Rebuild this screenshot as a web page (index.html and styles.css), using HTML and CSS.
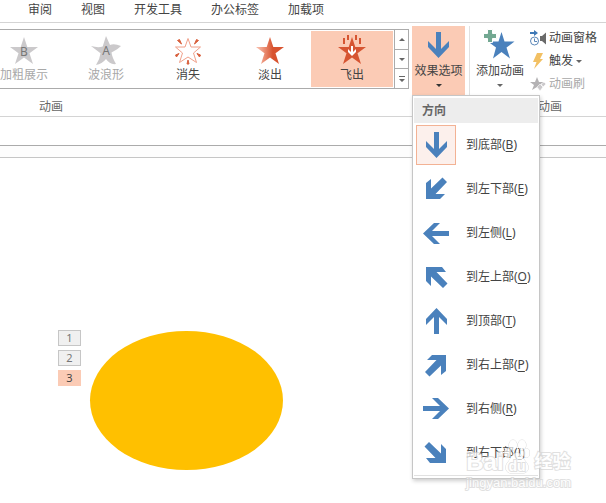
FILE: index.html
```html
<!DOCTYPE html>
<html lang="zh-CN">
<head>
    <meta charset="UTF-8">
    <meta name="viewport" content="width=device-width, initial-scale=1.0">
    <title>动画</title>
    <link rel="stylesheet" href="styles.css">
</head>
<body>
    <svg class="defs" aria-hidden="true">
        <defs>
            <linearGradient id="fade" x1="0" x2="1" y1="0" y2="0">
                <stop offset="0.1" stop-color="#f6b5a1"/>
                <stop offset="0.6" stop-color="#d8532f"/>
            </linearGradient>
            <symbol id="star" viewBox="0 0 32 32">
                <path d="M16 3 19.3 13H30L21.5 19.3 25 30 16 23.6 7 30 10.5 19.3 2 13H12.7Z"/>
            </symbol>
            <symbol id="arrow" viewBox="0 0 26 26">
                <path d="M11 0h5v17l8-8v6L13.5 26 3 15V9l8 8z"/>
            </symbol>
            <symbol id="arrow-diagonal" viewBox="0 0 26 26">
                <path d="M3 7 8 3V12.500L19.500 1.500 24 6 12.500 18H22L17 23H3Z"/>
            </symbol>
        </defs>
    </svg>

    <nav class="tabs">
        <button>审阅</button>
        <button>视图</button>
        <button>开发工具</button>
        <button>办公标签</button>
        <button>加载项</button>
    </nav>

    <div class="ribbon">
        <div class="group group-animation">
            <div class="controls">
                <div class="gallery">
                    <div class="gallery-items">
                        <button class="effect" disabled>
                            <svg class="icon-32" viewBox="0 0 32 32">
                                <use href="#star" fill="#cbc9cb"/>
                                <text x="16" y="22" class="star-letter">B</text>
                            </svg>
                            加粗展示
                        </button>
                        <button class="effect" disabled>
                            <svg class="icon-32" viewBox="0 0 32 32">
                                <path fill="#cbc9cb" d="M16 2 20 11Q24 9 31 12 28 15 21.5 18.5 22 23 26 30 20 31 16 25 12 30 6 31 10 25 10.5 19.3L1 12Q8 14 12.7 12.5Z"/>
                                <text x="16" y="21" class="star-letter">A</text>
                            </svg>
                            波浪形
                        </button>
                        <button class="effect">
                            <svg class="icon-32" viewBox="0 0 32 32">
                                <path fill="#fff" stroke="#f0a08a" d="M16 4.500 19 13H28.500L21.500 19 24.500 28.500 16 23 7.500 28.500 10.500 19 3.500 13H13Z"/>
                                <path fill="#d8603d" stroke="#d8603d" stroke-linejoin="round" d="M5.500 6.500 7.500 5.500 9.500 10ZM26.500 6.500 24.500 5.500 22.500 10ZM3.500 21 7 19.500 4.500 23ZM28.500 21 25 19.500 27.500 23ZM16 26 17 30H15Z"/>
                            </svg>
                            消失
                        </button>
                        <button class="effect">
                            <svg class="icon-32" viewBox="0 0 32 32"><use href="#star" fill="url(#fade)"/></svg>
                            淡出
                        </button>
                        <button class="effect selected">
                            <svg class="icon-32" viewBox="0 0 32 32">
                                <use href="#star" fill="#d65532"/>
                                <path fill="#d65532" d="M7 4h2v6H7zM11 1h2v5h-2zM19 1h2v5h-2zM23 4h2v6h-2z"/>
                                <path fill="#fff" d="M15 12h2v6l3-3v3l-4 4-4-4v-3l3 3z"/>
                            </svg>
                            飞出
                        </button>
                    </div>
                    <div class="scroller">
                        <button aria-label="上一行"><svg viewBox="0 0 8 8"><path d="M1 6H7L4 3Z"/></svg></button>
                        <button aria-label="下一行"><svg viewBox="0 0 8 8"><path d="M1 3H7L4 6Z"/></svg></button>
                        <button aria-label="其他"><svg viewBox="0 0 8 8"><path d="M1 1h6v1H1zM1 4H7L4 7Z"/></svg></button>
                    </div>
                </div>
                <div class="dropdown">
                    <button class="big-button open" aria-expanded="true">
                        <svg class="icon-32" viewBox="0 0 32 32"><use href="#arrow" x="2" y="3" width="26" height="26" fill="#4a81bc"/></svg>
                        效果选项
                        <span class="caret"></span>
                    </button>
                    <div class="menu">
                        <h2>方向</h2>
                        <button class="menu-item current">
                            <span class="menu-icon"><svg viewBox="0 0 26 26"><use href="#arrow"/></svg></span>
                            <span>到底部(<u>B</u>)</span>
                        </button>
                        <button class="menu-item">
                            <span class="menu-icon"><svg viewBox="0 0 26 26"><use href="#arrow-diagonal"/></svg></span>
                            <span>到左下部(<u>E</u>)</span>
                        </button>
                        <button class="menu-item">
                            <span class="menu-icon"><svg viewBox="0 0 26 26"><use href="#arrow" transform="rotate(90 13 13)"/></svg></span>
                            <span>到左侧(<u>L</u>)</span>
                        </button>
                        <button class="menu-item">
                            <span class="menu-icon"><svg viewBox="0 0 26 26"><use href="#arrow-diagonal" transform="rotate(90 13 13)"/></svg></span>
                            <span>到左上部(<u>O</u>)</span>
                        </button>
                        <button class="menu-item">
                            <span class="menu-icon"><svg viewBox="0 0 26 26"><use href="#arrow" transform="matrix(1 0 0 -1 0 26)"/></svg></span>
                            <span>到顶部(<u>T</u>)</span>
                        </button>
                        <button class="menu-item">
                            <span class="menu-icon"><svg viewBox="0 0 26 26"><use href="#arrow-diagonal" transform="rotate(180 13 13)"/></svg></span>
                            <span>到右上部(<u>P</u>)</span>
                        </button>
                        <button class="menu-item">
                            <span class="menu-icon"><svg viewBox="0 0 26 26"><use href="#arrow" transform="rotate(270 13 13)"/></svg></span>
                            <span>到右侧(<u>R</u>)</span>
                        </button>
                        <button class="menu-item">
                            <span class="menu-icon"><svg viewBox="0 0 26 26"><use href="#arrow-diagonal" transform="rotate(270 13 13)"/></svg></span>
                            <span>到右下部(<u>I</u>)</span>
                        </button>
                    </div>
                </div>
            </div>
            <div class="group-label">动画</div>
        </div>

        <div class="group group-advanced">
            <div class="controls">
                <button class="big-button">
                    <svg class="icon-32" viewBox="0 0 32 32">
                        <path fill="#4a81bc" d="M17.500 3 20.500 12.500H30.500L22.500 18.500 26 29.500 17.500 23 9 29.500 12 18.500 4 12.500H14.500Z"/>
                        <path fill="#73a892" stroke="#fff" d="M3.500.5h5v4h4v5h-4v4h-5v-4h-4v-5h4z"/>
                    </svg>
                    添加动画
                    <span class="caret"></span>
                </button>
                <div class="small-buttons">
                    <button>
                        <svg class="icon-16" viewBox="0 0 16 16">
                            <path fill="#3f79b7" d="M0 2h4V0l4 3-4 3V4H0z"/>
                            <circle cx="4.500" cy="11" r="4" fill="#fff" stroke="#5b87b8"/>
                            <path fill="none" stroke="#5b87b8" d="M4.500 8.500v3H7"/>
                            <path fill="#6a6a6a" d="M10 6h2l4-3.500v12L12 11h-2z"/>
                        </svg>
                        动画窗格
                    </button>
                    <button>
                        <svg class="icon-16" viewBox="0 0 16 16"><path fill="#f2c063" d="M7 0h6L10 6h3L4 16 6.500 9H3Z"/></svg>
                        触发
                        <span class="caret"></span>
                    </button>
                    <button disabled>
                        <svg class="icon-16" viewBox="0 0 16 16">
                            <path fill="#b4b2b4" d="M7 1 9 6h5l-4 3 1 5-4-3-5 3 2-5-4-3h5z"/>
                            <path fill="#cbc9cb" stroke="#fff" stroke-width=".6" d="m7 11 3-3 3 3-3 4zM11 8l3-2 2 2-3 3z"/>
                        </svg>
                        动画刷
                    </button>
                </div>
            </div>
            <div class="group-label">高级动画</div>
        </div>
    </div>

    <div class="toolbar-strip"></div>
    <div class="ruler"></div>

    <main class="slide">
        <div class="order-tags">
            <button>1</button>
            <button>2</button>
            <button class="active">3</button>
        </div>
        <div class="oval"></div>
    </main>

    <div class="watermark">
        <div class="watermark-logo">
            <span>Bai</span>
            <span class="paw">
                <svg viewBox="0 0 26 36">
                    <g fill="#fff" stroke="#ccc">
                        <ellipse cx="9" cy="6" rx="4" ry="5"/>
                        <ellipse cx="18" cy="6" rx="4" ry="5"/>
                        <ellipse cx="3.500" cy="14" rx="3" ry="4.500"/>
                        <ellipse cx="22.500" cy="14" rx="3" ry="4.500"/>
                        <path d="M13 14C18 14 19 20 22 23 27 29 23 35 18 34H8C3 35-1 29 4 23 7 20 8 14 13 14Z"/>
                    </g>
                </svg>
                <span class="du">du</span>
            </span>
            <span class="watermark-cn">经验</span>
        </div>
        <div class="watermark-url">jingyan.baidu.com</div>
    </div>
</body>
</html>
```
FILE: styles.css
```css
body {
    margin: 0;
    background-color: #fff;
    color: #444;
    font-family: "Noto Sans", "Noto Sans CJK SC", sans-serif;
    font-size: 12px;
    line-height: 16px;
}
button {
    margin: 0;
    padding: 0;
    border: none;
    background: none;
    color: inherit;
    font: inherit;
    white-space: nowrap;
}
svg {
    display: block;
    flex-shrink: 0;
}
.defs {
    position: absolute;
    width: 0;
    height: 0;
}
.tabs {
    display: flex;
    gap: 29px;
    height: 20px;
    padding: 2px 0 0 28px;
    align-items: flex-start;
    border-bottom: 1px solid #d4d4d4;
}
.ribbon {
    display: flex;
    padding: 3px 0 1px;
    border-bottom: 1px solid #d4d4d4;
}
.group-animation {
    flex: 1;
    min-width: 0;
    border-right: 1px solid #e1e1e1;
}
.group-advanced {
    width: 136px;
}
.controls {
    display: flex;
    height: 73px;
}
.group-animation .controls {
    gap: 3px;
    padding-right: 4px;
}
.group-advanced .controls {
    gap: 2px;
    padding-left: 2px;
}
.group-label {
    color: #666;
    text-align: center;
}
.group-animation .group-label {
    padding-left: 39px;
    text-align: left;
}
.gallery {
    display: flex;
    flex: 1;
    min-width: 0;
    height: 58px;
    margin-top: 3px;
    border: 1px solid #ababab;
    border-left: none;
}
.gallery-items {
    display: flex;
    flex: 1;
    justify-content: flex-end;
    min-width: 0;
    padding: 1px;
    overflow: hidden;
}
.effect {
    display: flex;
    flex: 0 0 82px;
    flex-direction: column;
    gap: 1px;
    align-items: center;
    padding-top: 3px;
}
.effect:disabled,
.small-buttons button:disabled {
    color: #a8a8a8;
}
.effect.selected {
    background-color: #fbcbb5;
}
.icon-32 {
    width: 32px;
    height: 32px;
}
.icon-16 {
    width: 16px;
    height: 16px;
}
.star-letter {
    fill: #777;
    font-size: 12px;
    text-anchor: middle;
}
.scroller {
    display: flex;
    flex: 0 0 13px;
    flex-direction: column;
    border-right: 1px solid #ababab;
    border-left: 1px solid #ababab;
    margin-right: -1px;
}
.scroller button {
    display: flex;
    flex: 1;
    align-items: center;
    justify-content: center;
}
.scroller button + button {
    border-top: 1px solid #ababab;
}
.scroller svg {
    width: 8px;
    height: 8px;
    fill: #666;
}
.dropdown {
    position: relative;
}
.big-button {
    display: flex;
    flex-direction: column;
    align-items: center;
    width: 53px;
    height: 70px;
    padding-top: 3px;
}
.big-button .icon-32 {
    margin-bottom: 2px;
}
.group-advanced .big-button {
    width: 56px;
}
.big-button.open {
    background-color: #fbcbb5;
}
.caret {
    border: 3px solid transparent;
    border-top-color: #666;
    border-bottom: none;
}
.big-button .caret {
    margin-top: 5px;
}
.open .caret {
    border-top-color: #333;
}
.small-buttons {
    display: flex;
    flex-direction: column;
    gap: 7px;
    padding-top: 4px;
}
.small-buttons button {
    display: flex;
    gap: 3px;
    align-items: center;
}
.menu {
    position: absolute;
    top: 69px;
    left: 0;
    z-index: 2;
    width: 124px;
    padding: 2px 1px;
    border: 1px solid #c6c6c6;
    background-color: #fff;
    box-shadow: 1px 2px 4px rgba(0, 0, 0, 0.2);
}
.menu::after {
    content: "";
    display: block;
    border-top: 1px solid #e1e1e1;
}
.menu h2 {
    margin: 0;
    padding: 5px 8px 4px;
    background-color: #ededed;
    color: #666;
    font-size: 12px;
    font-weight: bold;
}
.menu-item {
    display: flex;
    gap: 10px;
    align-items: center;
    width: 100%;
    height: 44px;
    padding-left: 2px;
}
.menu-icon {
    display: flex;
    align-items: center;
    justify-content: center;
    box-sizing: border-box;
    width: 40px;
    height: 40px;
    border: 1px solid transparent;
}
.current .menu-icon {
    border-color: #f3b294;
    background-color: #fcf0ec;
}
.menu-icon svg {
    width: 26px;
    height: 26px;
    fill: #4a81bc;
}
.menu u {
    text-underline-offset: 2px;
}
.toolbar-strip {
    height: 28px;
    border-bottom: 1px solid #ababab;
}
.ruler {
    height: 11px;
    border-bottom: 1px solid #c6c6c6;
    background-color: #fdfdfd;
}
.slide {
    display: flex;
    gap: 9px;
    padding: 172px 0 30px 58px;
}
.order-tags {
    display: flex;
    flex-direction: column;
    gap: 4px;
}
.order-tags button {
    width: 23px;
    height: 16px;
    border: 1px solid #c6c6c6;
    background-color: #f0f0f0;
    color: #777;
    font-size: 11px;
    line-height: 14px;
}
.order-tags .active {
    border-color: #fbcbb5;
    background-color: #fbcbb5;
    color: #444;
}
.oval {
    width: 193px;
    height: 139px;
    margin-top: 1px;
    border-radius: 50%;
    background-color: #ffc000;
}
.watermark {
    position: absolute;
    right: 35px;
    bottom: 12px;
    z-index: 3;
    color: #fff;
    font-family: "Liberation Sans", "Noto Sans CJK SC", sans-serif;
    font-weight: bold;
    opacity: 0.7;
    paint-order: stroke;
    -webkit-text-stroke: 2px #d4d4d4;
}
.watermark-logo {
    display: flex;
    align-items: flex-end;
    font-size: 24px;
    line-height: 26px;
}
.paw {
    position: relative;
}
.paw svg {
    width: 26px;
    height: 36px;
}
.du {
    position: absolute;
    bottom: 1px;
    left: 5px;
    font-size: 14px;
    line-height: 16px;
}
.watermark-cn {
    margin-left: 5px;
    font-size: 18px;
}
.watermark-url {
    font-size: 13px;
    font-weight: normal;
}
```
